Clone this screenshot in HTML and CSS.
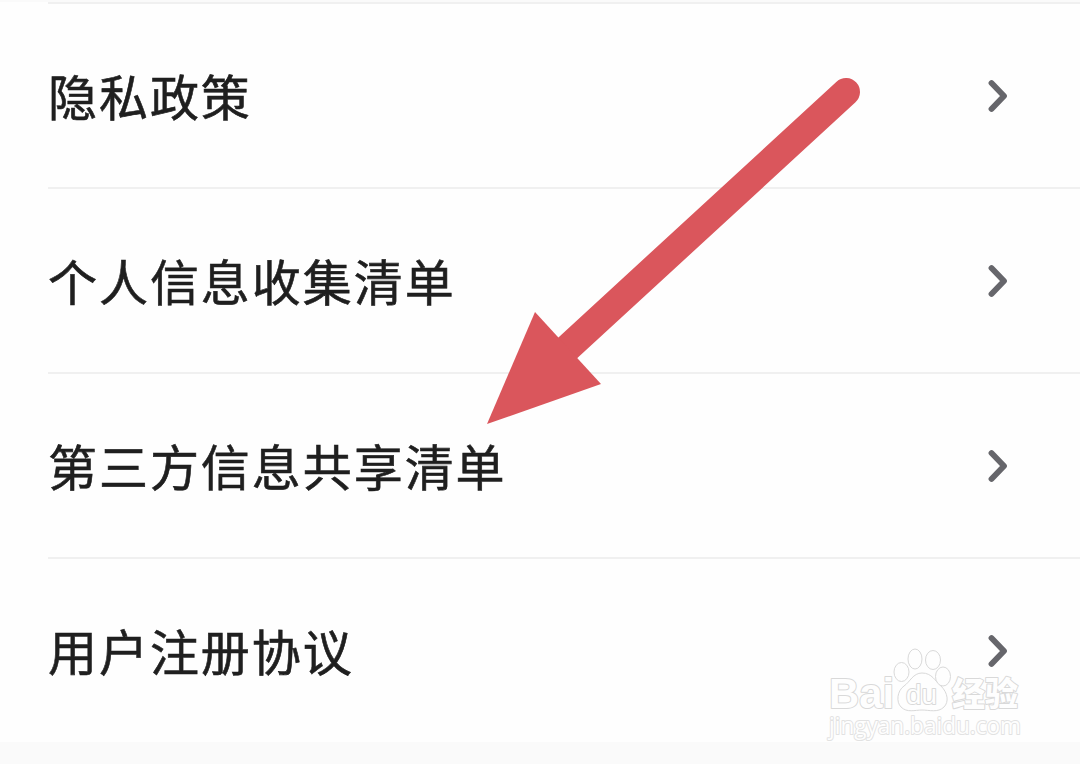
FILE: index.html
```html
<!DOCTYPE html>
<html lang="zh-CN">
<head>
  <meta charset="UTF-8">
  <meta name="viewport" content="width=device-width, initial-scale=1.0">
  <title>隐私政策</title>
  <link rel="stylesheet" href="styles.css">
</head>
<body>
  <div class="page">
    <ul class="list">
      <li class="item">
        <span class="label">隐私政策</span>
        <svg class="chevron" viewBox="0 0 24 36"><path d="M5.500 5 L18 18 L5.500 31"/></svg>
      </li>
      <li class="item">
        <span class="label">个人信息收集清单</span>
        <svg class="chevron" viewBox="0 0 24 36"><path d="M5.500 5 L18 18 L5.500 31"/></svg>
      </li>
      <li class="item">
        <span class="label">第三方信息共享清单</span>
        <svg class="chevron" viewBox="0 0 24 36"><path d="M5.500 5 L18 18 L5.500 31"/></svg>
      </li>
      <li class="item">
        <span class="label">用户注册协议</span>
        <svg class="chevron" viewBox="0 0 24 36"><path d="M5.500 5 L18 18 L5.500 31"/></svg>
      </li>
    </ul>

    <!-- Arrow -->
    <svg class="arrow" viewBox="0 0 380 352">
      <path class="shaft" d="M366 22 L80 285"/>
      <path class="head" d="M7 354 L55 242 L121 314 Z"/>
    </svg>

    <!-- Watermark -->
    <svg class="watermark" viewBox="0 0 210 100">
      <path d="M102 23 C93 23 90 32 84 36 C77 41 76 52 81 57 C87 63 95 60 102 60 C109 60 118 63 124 57 C129 52 128 43 121 36 C115 31 112 23 102 23 Z"/>
      <ellipse cx="81.500" cy="22" rx="7.500" ry="9.500"/>
      <ellipse cx="95" cy="9" rx="7" ry="10"/>
      <ellipse cx="113" cy="10" rx="7.500" ry="9.500"/>
      <ellipse cx="123" cy="26.500" rx="7.500" ry="9.500"/>
      <text class="brand" x="9" y="58" textLength="65" lengthAdjust="spacingAndGlyphs">Bai</text>
      <text class="du" x="86" y="54" textLength="31" lengthAdjust="spacingAndGlyphs">du</text>
      <text class="cn" x="132" y="56" textLength="66" lengthAdjust="spacingAndGlyphs">经验</text>
      <text class="site" x="9" y="84" textLength="192" lengthAdjust="spacingAndGlyphs">jingyan.baidu.com</text>
    </svg>
  </div>
</body>
</html>
```

FILE: styles.css
```css
/* Reset & Base */
* { margin: 0; padding: 0; box-sizing: border-box; }
body {
  background: #fafafa;
  font-family: "Noto Sans CJK SC", sans-serif;
  color: #1f1f1f;
  overflow: hidden;
}
.page {
  position: relative; width: 1080px; height: 764px;
  padding-top: 2px;
}

/* List */
.list {
  list-style: none; height: 740px;
  padding-left: 48px; background: #fefefe;
}
.item {
  display: flex; align-items: center; justify-content: space-between;
  height: 185px; padding-right: 70px;
  border-top: 2px solid #f0f0f0;
}
.label {
  font-size: 49px; line-height: 72px; letter-spacing: 1.95px;
  padding-bottom: 2px;
  -webkit-text-stroke: 0.6px #1f1f1f;
}
.chevron {
  width: 24px; height: 36px;
  fill: none; stroke: #66666b; stroke-width: 5.8;
  stroke-linecap: round; stroke-linejoin: round;
}

/* Arrow */
.arrow {
  position: absolute; left: 480px; top: 70px;
  width: 380px; height: 352px; overflow: visible;
}
.shaft { fill: none; stroke: #da565c; stroke-width: 28; stroke-linecap: round; }
.head { fill: #da565c; }

/* Watermark */
.watermark {
  position: absolute; left: 820px; top: 650px;
  width: 210px; height: 100px; overflow: visible;
  fill: #fefefe; stroke: #d9d9d9; stroke-width: 1;
}
.watermark text { paint-order: stroke; stroke-width: 2; stroke-linejoin: round; }
.brand { font: bold 43px "Liberation Sans", sans-serif; }
.du { font: 28px "Liberation Sans", sans-serif; }
.cn { font: 900 33px "Noto Sans CJK SC", sans-serif; }
.watermark .site { font: 24px "Open Sans", sans-serif; stroke: #e2e2e2; }
```
